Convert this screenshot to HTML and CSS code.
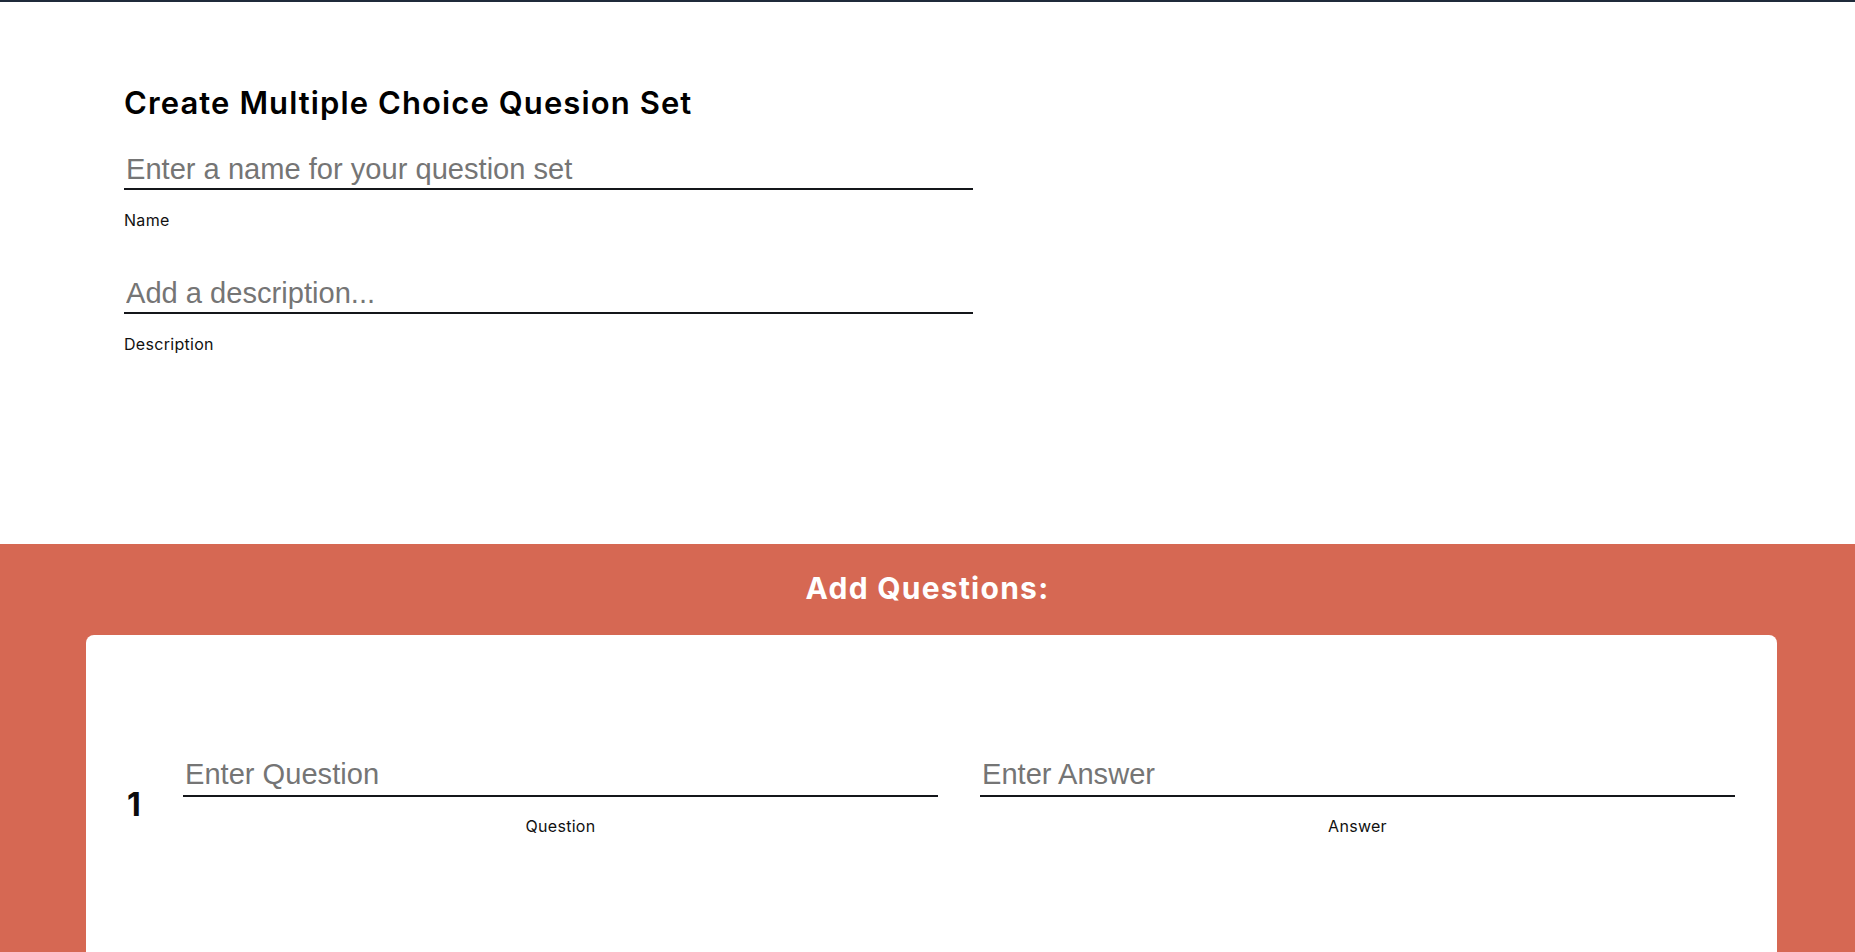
FILE: index.html
```html
<!DOCTYPE html>
<html lang="en">
<head>
<meta charset="utf-8">
<title>Create Multiple Choice Question Set</title>
<link rel="stylesheet" href="styles.css">
</head>
<body>
<div class="topbar"></div>
<main class="setup">
  <h1 class="title">Create Multiple Choice Quesion Set</h1>
  <div class="field">
    <input class="line-input" type="text" placeholder="Enter a name for your question set">
    <label class="field-label">Name</label>
  </div>
  <div class="field field-desc">
    <input class="line-input" type="text" placeholder="Add a description...">
    <label class="field-label">Description</label>
  </div>
</main>
<section class="questions">
  <h2 class="questions-title">Add Questions:</h2>
  <div class="card">
    <div class="qrow">
      <span class="num">1</span>
      <div class="qfield">
        <input class="line-input q-input" type="text" placeholder="Enter Question">
        <label class="field-label q-label">Question</label>
      </div>
      <div class="qfield">
        <input class="line-input q-input" type="text" placeholder="Enter Answer">
        <label class="field-label q-label">Answer</label>
      </div>
    </div>
  </div>
</section>
</body>
</html>
```

FILE: styles.css
```css
html, body {
  margin: 0;
  padding: 0;
  background: #ffffff;
  height: 100%;
  overflow: hidden;
}

body {
  font-family: Inter, "Noto Sans", "DejaVu Sans", sans-serif;
  color: #000;
}

.topbar {
  height: 2px;
  background: #1f2a3a;
}

.setup {
  padding: 81px 0 190px 124px;
}

.title {
  margin: 0;
  font-size: 31px;
  line-height: 40px;
  font-weight: 600;
  letter-spacing: 1.1px;
  color: #000;
}

.field {
  width: 849px;
  margin-top: 27px;
  display: flex;
  flex-direction: column;
}

.field-desc {
  margin-top: 44px;
}

.line-input {
  display: block;
  box-sizing: border-box;
  width: 100%;
  height: 40px;
  padding: 0 2px;
  border: none;
  border-bottom: 2px solid #14161a;
  background: transparent;
  outline: none;
  font-family: "Liberation Sans", Arial, sans-serif;
  font-size: 29.1px;
  color: #222;
}

.line-input::placeholder {
  color: #757575;
  opacity: 1;
}

.field-label {
  display: block;
  margin-top: 20px;
  font-size: 16px;
  line-height: 20px;
  font-weight: 400;
  letter-spacing: 0.3px;
  color: #111;
}

.questions {
  background: #d66853;
  padding-top: 26px;
  height: 100%;
  box-sizing: border-box;
}

.questions-title {
  margin: 0;
  text-align: center;
  color: #ffffff;
  font-size: 30px;
  line-height: 36px;
  font-weight: 700;
  letter-spacing: 1.25px;
}

.card {
  margin: 29px 78px 0 86px;
  background: #ffffff;
  border-radius: 8px 8px 0 0;
  padding: 119px 42px 0 40px;
  height: 400px;
}

.qrow {
  display: flex;
  align-items: flex-start;
}

.num {
  flex: 0 0 56px;
  margin-top: 31px;
  font-size: 32px;
  line-height: 40px;
  font-weight: 700;
  color: #0b0b0b;
  padding-left: 1px;
}

.qfield {
  flex: 1 1 0;
  display: flex;
  flex-direction: column;
}

.qfield + .qfield {
  margin-left: 42px;
}

.q-input {
  height: 43px;
}

.q-label {
  text-align: center;
  margin-top: 19px;
}
```
